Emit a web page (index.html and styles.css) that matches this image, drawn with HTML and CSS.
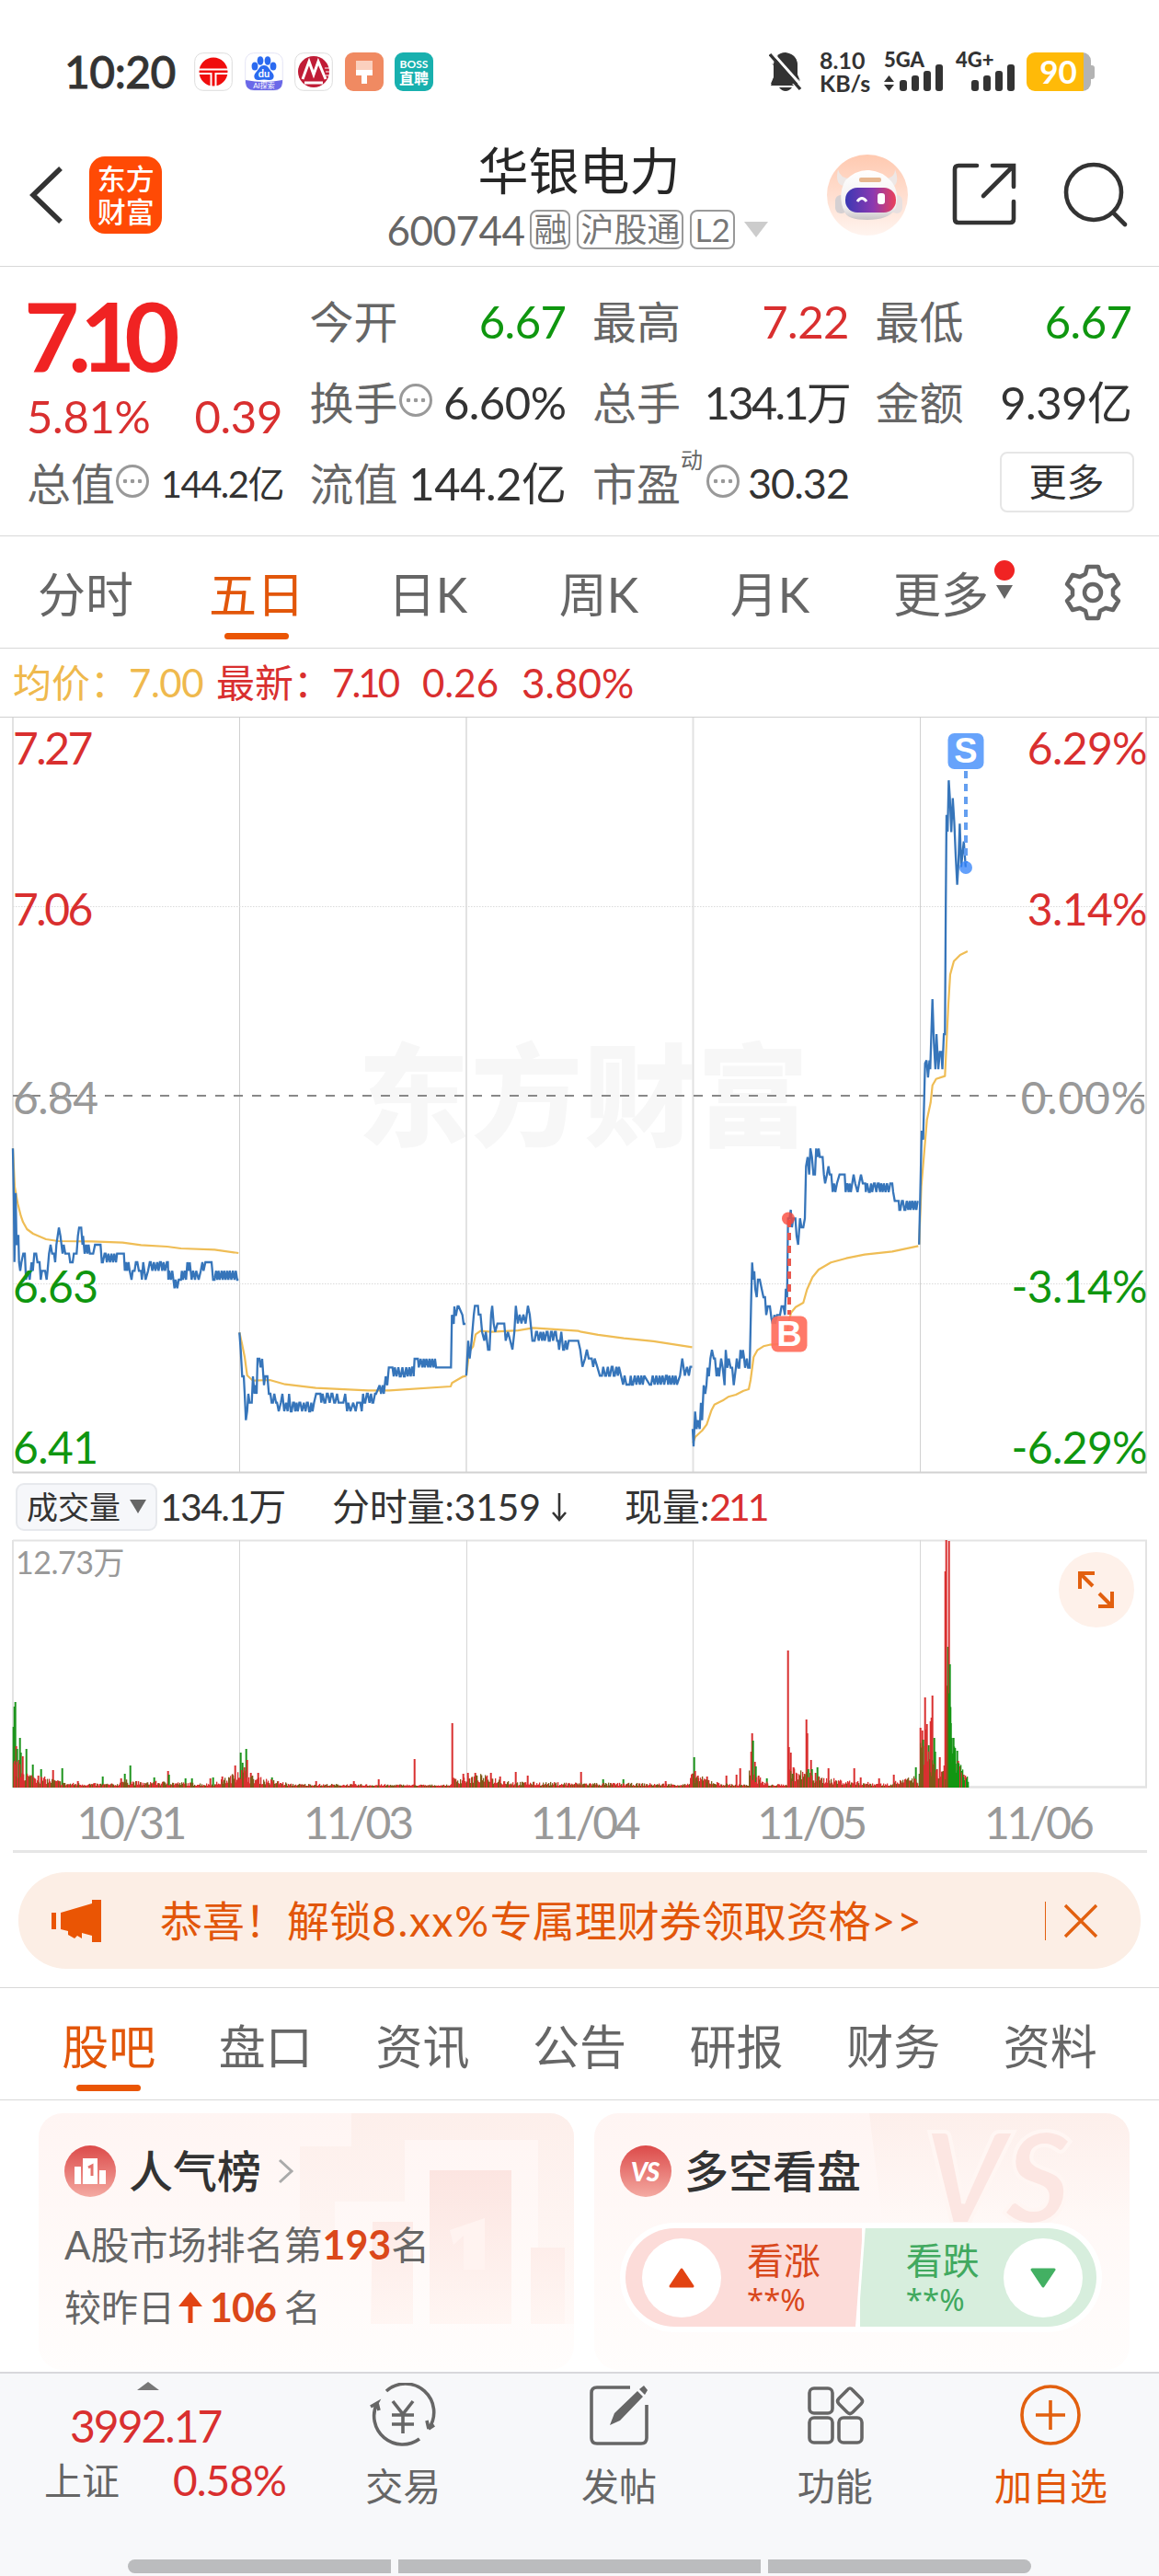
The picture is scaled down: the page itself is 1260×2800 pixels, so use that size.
FILE: index.html
```html
<!DOCTYPE html>
<html lang="zh-CN">
<head>
<meta charset="utf-8">
<title>华银电力 600744</title>
<link rel="stylesheet" href="styles.css">
</head>
<body>
<div class="status">
  <span class="clock">10:20</span>
  <div class="apps">
    <svg viewBox="0 0 42 42"><rect x=".7" y=".7" width="40.6" height="40.6" rx="9" fill="#fff" stroke="#ddd"/><circle cx="21" cy="21" r="15.500" fill="#f00d0d"/><path d="M5 18.500H37M5 23H18.500V37M37 23H23.500V37" stroke="#fff" stroke-width="2" fill="none"/></svg>
    <svg viewBox="0 0 42 42"><rect x=".7" y=".7" width="40.6" height="40.6" rx="9" fill="#fff" stroke="#e4e4f5"/><path d="M1 30Q21 34 41 30V33Q40 41 32 41H10Q2 41 1 33Z" fill="#6a68e8"/><g fill="#2b6af0"><ellipse cx="11" cy="15" rx="3.4" ry="4.5"/><ellipse cx="17" cy="9" rx="3.4" ry="4.8"/><ellipse cx="25" cy="9" rx="3.4" ry="4.8"/><ellipse cx="31" cy="15" rx="3.4" ry="4.5"/><path d="M21 14c5 0 6 5 9 8s2 9-4 8q-5-1-10 0c-6 1-7-5-4-8s4-8 9-8z"/></g><text x="21" y="27" class="t-du">du</text><text x="21" y="39" class="t-ai">AI探索</text></svg>
    <svg viewBox="0 0 42 42"><rect x=".7" y=".7" width="40.6" height="40.6" rx="9" fill="#fff" stroke="#ddd"/><circle cx="21" cy="21" r="17" fill="#c01c36"/><path d="M9 29L16 10L21 24L26 10L34 29M11 33H31" stroke="#fff" stroke-width="3" fill="none"/><path d="M33 17h6M34 21h5M34 25h5" stroke="#fff" stroke-width="1.2"/></svg>
    <svg viewBox="0 0 42 42"><rect width="42" height="42" rx="9" fill="#f08a62"/><path d="M12 9H30V25H24V34H18V25H12Z" fill="#fff"/><path d="M12 9H30V19H12Z" fill="#fbd0be"/></svg>
    <svg viewBox="0 0 42 42"><rect width="42" height="42" rx="9" fill="#18b0ae"/><text x="21" y="17" class="t-boss">BOSS</text><text x="21" y="34" class="t-zhi">直聘</text></svg>
  </div>
  <svg class="bell" viewBox="0 0 36 42"><path d="M7 5Q12 0 18 0Q31 2 31 15V24L34 31L9 3M3 12L27 36H2L5 28V13Z" fill="#333"/><path d="M5 12Q7 2 18 1Q31 2 31 15V26L34 34H2L5 27Z" fill="#333"/><path d="M5 2L37 38" stroke="#fff" stroke-width="3"/><path d="M1 2L34 40" stroke="#333" stroke-width="3.4"/><path d="M11 38H25Q22 42 18 42T11 38Z" fill="#333"/></svg>
  <div class="speed"><span>8.10</span><span>KB/s</span></div>
  <div class="net"><span>5GA</span>
    <svg viewBox="0 0 66 30" width="66" height="30"><path d="M0 20L5.500 13L11 20ZM0 23L5.500 30L11 23Z" fill="#333"/><g fill="#333"><rect x="17" y="18" width="8" height="12" rx="3"/><rect x="30" y="13" width="8" height="17" rx="3"/><rect x="43" y="8" width="8" height="22" rx="3"/><rect x="56" y="1" width="8" height="29" rx="3"/></g></svg></div>
  <div class="net net4"><span>4G+</span>
    <svg viewBox="0 0 66 30" width="66" height="30"><g fill="#333"><rect x="17" y="18" width="8" height="12" rx="3"/><rect x="30" y="13" width="8" height="17" rx="3"/><rect x="43" y="8" width="8" height="22" rx="3"/><rect x="56" y="1" width="8" height="29" rx="3"/></g></svg></div>
  <div class="battery"><span>90</span></div>
</div>

<header class="top">
  <svg class="back" viewBox="0 0 38 66"><path d="M34 4L4 33L34 62" fill="none" stroke="#333" stroke-width="5.500"/></svg>
  <div class="logo"><span>东方</span><span>财富</span></div>
  <div class="title">
    <h1>华银电力</h1>
    <div class="code"><span class="num">600744</span><i>融</i><i>沪股通</i><i>L2</i><b class="caret"></b></div>
  </div>
  <svg class="robot" viewBox="0 0 88 88"><defs><linearGradient id="rb" x2="0" y2="1"><stop stop-color="#ffc9b0"/><stop offset="1" stop-color="#fff4ef"/></linearGradient><linearGradient id="vz"><stop stop-color="#3a38b4"/><stop offset=".55" stop-color="#8c39b0"/><stop offset="1" stop-color="#ea405a"/></linearGradient><linearGradient id="hd" x2="0" y2="1"><stop stop-color="#fff"/><stop offset=".75" stop-color="#f1eeee"/><stop offset="1" stop-color="#c9c4c6"/></linearGradient></defs><circle cx="44" cy="44" r="44" fill="url(#rb)"/><path d="M12 16Q8 34 20 34L26 26Q14 26 12 16ZM74 16Q80 32 70 36L62 26Q74 26 74 16Z" fill="#eee7e5"/><rect x="9" y="44" width="13" height="20" rx="6" fill="#d5d0d2"/><rect x="70" y="44" width="12" height="20" rx="6" fill="#e8e0e0"/><path d="M20 28Q32 16 46 17T70 29Q80 42 74 60Q66 71 44 71T19 62Q11 45 20 28Z" fill="url(#hd)"/><rect x="20" y="36" width="55" height="27" rx="13" fill="url(#vz)"/><rect x="35" y="25" width="24" height="5" rx="2" fill="#e7b78f"/><path d="M33 51Q38 44 43 51" stroke="#fff" stroke-width="3" fill="none"/><rect x="55" y="42" width="8" height="12" rx="3" fill="#fff"/></svg>
  <svg class="share" viewBox="0 0 70 70"><path d="M27 3H7Q3 3 3 7V61Q3 65 7 65H63Q67 65 67 61V42M44 3H67V26M66 4L34 36" fill="none" stroke="#333" stroke-width="4.600" stroke-linecap="round"/></svg>
  <svg class="search" viewBox="0 0 72 72"><circle cx="34" cy="33" r="30" fill="none" stroke="#333" stroke-width="4.600"/><path d="M55 55L68 68" stroke="#333" stroke-width="4.600" stroke-linecap="round"/></svg>
</header>

<section class="quote">
  <div class="last">
    <div class="price">7.10</div>
    <div class="chg"><span>5.81%</span><span>0.39</span></div>
  </div>
  <div class="cell"><label>今开</label><span class="down">6.67</span></div>
  <div class="cell"><label>最高</label><span class="up">7.22</span></div>
  <div class="cell"><label>最低</label><span class="down">6.67</span></div>
  <div class="cell"><label>换手</label><em class="info"></em><span>6.60%</span></div>
  <div class="cell"><label>总手</label><span class="tight">134.1万</span></div>
  <div class="cell"><label>金额</label><span>9.39亿</span></div>
  <div class="cell"><label>总值</label><em class="info"></em><span class="sm">144.2亿</span></div>
  <div class="cell"><label>流值</label><span>144.2亿</span></div>
  <div class="cell"><label>市盈<sup>动</sup></label><em class="info pe"></em><span class="md">30.32</span></div>
  <div class="cell end"><button>更多</button></div>
</section>

<nav class="periods">
  <a>分时</a><a class="on">五日</a><a>日K</a><a>周K</a><a>月K</a><a class="more">更多<i class="dot"></i><i class="tri"></i></a>
  <svg class="gear" viewBox="0 0 62 62"><path d="M25 3H37L39 11L45 14L53 12L59 22L53 28V34L59 40L53 50L45 48L39 51L37 59H25L23 51L17 48L9 50L3 40L9 34V28L3 22L9 12L17 14L23 11Z" fill="none" stroke="#666" stroke-width="4.500" stroke-linejoin="round"/><circle cx="31" cy="31" r="9" fill="none" stroke="#666" stroke-width="4.500"/></svg>
</nav>

<div class="legend"><span class="avg"><u>均价：</u>7.00</span><span class="new"><u>最新：</u>7.10</span><span class="v1">0.26</span><span class="v2">3.80%</span></div>

<svg class="price-chart" viewBox="0 779 1260 823">
  <text x="389" y="1236" class="mark">东方财富</text>
  <g fill="none" stroke="#dadada">
    <path d="M0 779.500H1260M260.500 780V1600M1000.500 780V1600" stroke="#d0d0d0"/>
    <path d="M14 780V1601M507 780V1601M753.500 780V1601M1246 780V1601" stroke="#e2e2e2" stroke-width="2"/>
    <path d="M14 1600.500H1247" stroke="#d2d2d2" stroke-width="2"/>
    <path d="M14 985.500H1247M14 1395.500H1247" stroke-dasharray="1.500 1.500"/>
    <path d="M14 1191H1247" stroke="#888" stroke-width="2" stroke-dasharray="10 10"/>
  </g>
  <g id="avg-line" fill="none" stroke="#efbd55" stroke-width="2.200" stroke-linejoin="round"></g>
  <g id="price-line" fill="none" stroke="#3675ba" stroke-width="2.300" stroke-linejoin="miter" stroke-miterlimit="2"></g>
  <g class="axis">
    <text x="14" y="831" class="up seven">7.27</text><text x="14" y="1006" class="up seven">7.06</text><text x="14" y="1211" class="flat">6.84</text><text x="14" y="1416" class="down">6.63</text><text x="14" y="1591" class="down">6.41</text>
  </g>
  <g class="axis right">
    <text x="1247" y="831" class="up">6.29%</text><text x="1247" y="1006" class="up">3.14%</text><text x="1247" y="1211" class="flat zero">0.00%</text><text x="1247" y="1416" class="down">-3.14%</text><text x="1247" y="1591" class="down">-6.29%</text>
  </g>
  <path d="M1050 838V938" stroke="#649ff0" stroke-width="4" stroke-dasharray="8 6"/><circle cx="1050" cy="943" r="7" fill="#2f80fa" fill-opacity=".75"/>
  <rect x="1030.500" y="797" width="39" height="39" rx="7" fill="#67a3fb"/><text x="1050" y="829" class="trade">S</text>
  <path d="M858 1326V1429" stroke="#e8584e" stroke-width="4" stroke-dasharray="8 6"/><circle cx="857" cy="1324.500" r="7" fill="#fa4a3c" fill-opacity=".8"/>
  <rect x="838.500" y="1430.500" width="39" height="39" rx="7" fill="#ff6e5c" fill-opacity=".92"/><text x="858" y="1463" class="trade">B</text>
</svg>

<div class="vol-head">
  <div class="pick">成交量<i class="tri"></i></div>
  <span class="a">134.1万</span><span class="b">分时量:3159<svg viewBox="0 0 20 34"><path d="M10 2V31M3 23L10 31L17 23" fill="none" stroke="#333" stroke-width="2.600"/></svg></span><span class="c">现量:<span class="up">211</span></span>
</div>
<svg class="vol-chart" viewBox="0 1673 1260 271">
  <path d="M14 1674.500H1247M14 1674V1943M1246 1674V1943" fill="none" stroke="#e3e3e3" stroke-width="2"/>
  <path d="M260.500 1674V1943M507.500 1674V1943M753.500 1674V1943M1000.500 1674V1943" stroke="#d6d6d6"/>
  <path d="M14 1942.500H1247" stroke="#e3e3e3" stroke-width="2.500"/>
  <g id="volume"></g>
  <text x="17" y="1711" class="vmax">12.73万</text>
  <circle cx="1192" cy="1728" r="41" fill="#fef1ea"/>
  <path d="M1188 1724L1174 1710M1174 1727V1710H1190M1195 1732L1209 1746M1209 1730V1746H1194" fill="none" stroke="#e2600f" stroke-width="4"/>
</svg>
<div class="dates"><span>10/31</span><span>11/03</span><span>11/04</span><span>11/05</span><span>11/06</span></div>

<div class="banner">
  <svg class="horn" viewBox="0 0 54 48"><path d="M0 15H5V33H0ZM10 15L44 5V1H54V47H44V40L33 37V43L28 40L25 43L18 39V35L10 33Z" fill="#ea5504"/></svg>
  <span>恭喜！解锁<u>8.xx%</u>专属理财券领取资格<u>&gt;&gt;</u></span>
  <b class="sep"></b>
  <svg class="close" viewBox="0 0 38 38"><path d="M2 2L36 36M36 2L2 36" stroke="#e2600f" stroke-width="3.400"/></svg>
</div>

<nav class="sections"><a class="on">股吧</a><a>盘口</a><a>资讯</a><a>公告</a><a>研报</a><a>财务</a><a>资料</a></nav>

<main class="cards">
  <section class="card">
    <svg class="deco" viewBox="42 2297 582 279"><defs><linearGradient id="f1" x2="0" y2="1"><stop stop-color="#fdefeb"/><stop offset="1" stop-color="#fff9f7"/></linearGradient><linearGradient id="f2" x2="0" y2="1"><stop stop-color="#fce5e1"/><stop offset="1" stop-color="#fff6f3"/></linearGradient></defs><path d="M382 2297H624V2526H585V2326H440V2393H364V2430H326V2333H382Z" fill="url(#f1)"/><path d="M467 2359H556V2526H467ZM405 2415H449V2526H403ZM577 2443H614V2526H577Z" fill="url(#f2)"/><path d="M489 2424L527 2411V2467H504V2430L493 2440Z" fill="#fff3f0"/></svg>
    <div class="head"><svg class="badge" viewBox="0 0 56 56"><defs><linearGradient id="bg" x2="0" y2="1"><stop stop-color="#dc4a49"/><stop offset="1" stop-color="#f4aaa2"/></linearGradient></defs><circle cx="28" cy="28" r="28" fill="url(#bg)"/><path d="M11 23H18V42H11ZM20 14H36V42H20ZM38 27H45V42H38Z" fill="#fff"/><path d="M26 24L30 22V33" fill="none" stroke="#e4716b" stroke-width="3"/></svg><h2>人气榜</h2><svg class="go" viewBox="0 0 18 28"><path d="M2 2L15 14L2 26" fill="none" stroke="#aaa" stroke-width="3"/></svg></div>
    <p class="l1">A股市场排名第<b>193</b>名</p>
    <p class="l2">较昨日<svg viewBox="0 0 26 34"><path d="M13 0L26 16H15.500V34H10.500V16H0Z" fill="#e24312"/></svg><b>106</b>名</p>
  </section>
  <section class="card">
    <svg class="deco" viewBox="646 2297 582 279"><path d="M945 2297H1228V2420H960Z" fill="url(#f1)"/><text x="1004" y="2417" class="ghost">VS</text></svg>
    <div class="head"><svg class="badge" viewBox="0 0 56 56"><circle cx="28" cy="28" r="28" fill="url(#bg)"/><text x="27" y="39" class="vs">VS</text></svg><h2>多空看盘</h2></div>
    <div class="vote">
      <div class="bull"><i><svg viewBox="0 0 28 22"><path d="M14 2L26 20H2Z" fill="#e24312" stroke="#e24312" stroke-width="3" stroke-linejoin="round"/></svg></i><div class="txt"><span>看涨</span><small>**%</small></div></div>
      <div class="bear"><div class="txt"><span>看跌</span><small>**%</small></div><i><svg viewBox="0 0 28 22"><path d="M14 20L26 2H2Z" fill="#43b063" stroke="#43b063" stroke-width="3" stroke-linejoin="round"/></svg></i></div>
    </div>
  </section>
</main>

<footer class="bar">
  <div class="index"><i class="uptri"></i><div class="pts">3992.17</div><div class="row"><span>上证</span><span class="up">0.58%</span></div></div>
  <div class="item"><svg viewBox="0 0 76 70"><g fill="none" stroke="#666" stroke-width="3.600"><path d="M20 9A31 31 0 0 1 66 50L72 46M66 50L64 41M56 61A31 31 0 0 1 10 22L3 26M10 22L12 30"/><path d="M27 20L38 34L49 20M38 34V55M26 35H50M26 45H50"/></g></svg><span>交易</span></div>
  <div class="item"><svg viewBox="0 0 76 70"><path d="M50 5H14Q8 5 8 11V60Q8 66 14 66H62Q68 66 68 60V24" fill="none" stroke="#666" stroke-width="3.600"/><path d="M28 46L33 33L58 9L64 15L39 41ZM60 7L65 3L69 8L66 13Z" fill="#666"/></svg><span>发帖</span></div>
  <div class="item"><svg viewBox="0 0 76 70"><g fill="none" stroke="#666" stroke-width="3.600"><rect x="10" y="6" width="25" height="27" rx="5"/><rect x="10" y="38" width="25" height="27" rx="5"/><rect x="42" y="38" width="25" height="27" rx="5"/><path d="M51 8Q54 4 57 8L66 17Q69 20 66 23L57 32Q54 35 51 32L42 23Q39 20 42 17Z"/></g></svg><span>功能</span></div>
  <div class="item add"><svg viewBox="0 0 76 70"><circle cx="38" cy="35" r="31" fill="none" stroke="#e2600f" stroke-width="3.600"/><path d="M38 19V51M22 35H54" stroke="#e2600f" stroke-width="3.600"/></svg><span>加自选</span></div>
</footer>
<div class="home"><i></i><i class="mid"></i><i></i></div>
<script src="chart.js"></script>
</body>
</html>
```
FILE: styles.css
```css
* { box-sizing: border-box; }
body { margin: 0; width: 1260px; height: 2800px; overflow: hidden; background: #fff; color: #333; font-family: Lato, "Noto Sans CJK SC", sans-serif; font-size: 42px; line-height: 1; white-space: nowrap; }
svg { display: block; flex: none; }
h1, h2, p { margin: 0; font-weight: 400; }
i, em { font-style: normal; }
u { text-decoration: none; }
.up { color: #d92f2f; fill: #d92f2f; }
.down { color: #0f960f; fill: #0f960f; }
.flat { fill: #999; }

.status { display: flex; align-items: center; height: 156px; padding-left: 70px; }
.clock { width: 141px; font-size: 48px; font-weight: 500; -webkit-text-stroke: .8px #333; letter-spacing: -.5px; }
.apps { display: flex; gap: 12.500px; }
.apps svg { width: 42px; height: 42px; }
.t-du { font-size: 11px; font-weight: 700; fill: #fff; text-anchor: middle; }
.t-ai { font-size: 8px; fill: #fff; text-anchor: middle; }
.t-boss { font-size: 12px; font-weight: 700; fill: #fff; text-anchor: middle; }
.t-zhi { font-size: 16px; font-weight: 700; fill: #fff; text-anchor: middle; }
.bell { width: 36px; height: 42px; margin-left: 365px; }
.speed { display: flex; flex-direction: column; justify-content: space-between; width: 70px; height: 48px; margin-left: 19px; font-size: 25px; font-weight: 700; line-height: 23px; }
.net { position: relative; width: 78px; height: 44px; padding-top: 13px; }
.net span { position: absolute; left: 0; top: -2px; font-size: 22px; font-weight: 900; }
.net4 { width: 77px; }
.battery { width: 70px; height: 42px; border-radius: 9px; background: linear-gradient(90deg, #ffba08 62px, #b3b3b3 62px); color: #fff; font-size: 35px; font-weight: 700; text-align: center; line-height: 41px; padding-right: 1px; position: relative; }
.battery::after { content: ""; position: absolute; right: -4px; top: 14px; width: 5px; height: 15px; border-radius: 0 3px 3px 0; background: #b3b3b3; }

.top { display: flex; align-items: center; height: 134px; border-bottom: 1px solid #d8d8d8; padding: 0 33px 22px 32px; }
.back { width: 38px; height: 66px; margin-right: 27px; }
.logo { width: 80px; height: 84px; border-radius: 17px; background: #ff4a05; color: #fff; display: flex; flex-direction: column; align-items: center; justify-content: center; font-size: 31px; font-weight: 500; line-height: 36px; }
.title { display: flex; flex-direction: column; align-items: flex-start; width: 483px; margin-left: 243px; }
h1 { font-size: 55px; line-height: 64px; padding-left: 100px; color: #262626; margin-top: 2px; }
.code { display: flex; align-items: center; height: 46px; margin-top: 10px; color: #666; }
.code .num { font-size: 44px; width: 157px; letter-spacing: -.5px; padding-left: 1px; }
.code i { height: 43px; border: 2px solid #999; border-radius: 8px; font-size: 36px; line-height: 39px; padding: 0 2px; margin-right: 7px; color: #777; }
.code i:nth-of-type(3) { padding: 0 3px; font-size: 35px; margin-right: 10px; }
.caret { border: 13px solid transparent; border-top: 17px solid #ccc; border-bottom: 0; }
.robot { width: 88px; height: 88px; }
.share { width: 70px; height: 70px; margin-left: 48px; }
.search { width: 72px; height: 72px; margin-left: 50px; }

.quote { display: grid; grid-template-columns: repeat(4, 278px); grid-template-rows: 88px 88px 88px; column-gap: 29.500px; padding: 16px 0 12px 29px; height: 293px; border-bottom: 1px solid #d8d8d8; }
.last { grid-row: span 2; }
.price { font-size: 104px; font-weight: 700; color: #f02323; letter-spacing: -12px; line-height: 100px; padding-top: 8px; margin-left: -3px; }
.chg { display: flex; justify-content: space-between; font-size: 49px; color: #d92f2f; margin-top: 14px; letter-spacing: -.3px; }
.cell { display: flex; align-items: center; height: 88px; font-size: 49px; padding-bottom: 1px; }
.cell label { font-size: 48px; color: #666; position: relative; }
.cell > span { margin-left: auto; letter-spacing: -.5px; margin-right: -1px; }
.cell > .tight { letter-spacing: -2.800px; }
.cell > .sm { font-size: 40px; letter-spacing: -1.500px; }
.cell > .md { font-size: 45px; letter-spacing: -1px; }
.cell sup { position: absolute; left: 96px; top: -14px; font-size: 24px; line-height: 24px; }
.info { width: 36px; height: 36px; border: 3px solid #999; border-radius: 50%; background: radial-gradient(circle, #999 2px, transparent 2.600px) center / 8px 30px repeat-x; background-clip: content-box; padding: 0 3px; margin-left: 1px; margin-top: -6px; }
.info.pe { margin-left: 28px; }
.end { justify-content: flex-end; padding-bottom: 5px; }
button { width: 146px; height: 66px; margin-right: -3px; padding: 0; font: 41px/60px Lato, "Noto Sans CJK SC", sans-serif; color: #333; background: #fff; border: 2px solid #e6e6e6; border-radius: 8px; }

.periods { display: flex; height: 122px; border-bottom: 1px solid #d8d8d8; }
.periods a { width: 186px; text-align: center; font-size: 52px; line-height: 126px; color: #666; position: relative; }
.periods .on, .sections .on { color: #e2560a; }
.on::after { content: ""; position: absolute; left: 50%; margin-left: -35px; bottom: 9px; width: 70px; height: 7px; border-radius: 4px; background: #ea5504; }
.tri { border: 9px solid transparent; border-top: 15px solid #666; border-bottom: 0; }
.dot { position: absolute; right: 13px; top: 26px; width: 22px; height: 22px; border-radius: 50%; background: #f02323; }
.more .tri { position: absolute; right: 15px; top: 53px; }
.gear { width: 62px; height: 62px; margin: 30px 0 0 41px; }

.legend { display: flex; align-items: center; height: 74px; padding: 0 0 1px 14px; color: #d92f2f; font-size: 42px; }
.legend u { letter-spacing: 0; font-size: 42px; }
.avg { color: #efb94d; width: 221px; letter-spacing: -.5px; }
.new { width: 224px; letter-spacing: -3px; }
.v1 { width: 108px; }
.v2 { font-size: 44px; }
.price-chart { width: 1260px; height: 823px; }
.axis text { font-size: 48px; letter-spacing: -.6px; }
.axis .seven { letter-spacing: -2.500px; }
.right text { text-anchor: end; }
.axis .zero { letter-spacing: .8px; }
.mark { font-size: 121px; font-weight: 900; fill: #f7f7f7; letter-spacing: 2px; }
.trade { font-size: 38px; font-weight: 700; font-family: "Liberation Sans", sans-serif; fill: #fff; text-anchor: middle; }

.vol-head { display: flex; align-items: center; height: 71px; padding-left: 17px; font-size: 41px; }
.pick { display: flex; align-items: center; justify-content: space-between; width: 154px; height: 52px; padding: 0 10px; font-size: 34px; border: 2px solid #e7e9ed; border-radius: 9px; background: #f6f7fa; }
.a { width: 190px; padding-left: 3px; letter-spacing: -1.700px; }
.b { display: flex; align-items: center; width: 318px; letter-spacing: -.2px; }
.b svg { width: 20px; height: 34px; margin-left: 10px; }
.c .up { letter-spacing: -3px; }
.vol-chart { width: 1260px; height: 271px; }
.vmax { font-size: 34px; fill: #999; letter-spacing: -.5px; }
.dates { display: flex; height: 70px; margin: 0 13px 0 14px; border-bottom: 3px solid #e6e6e6; color: #999; font-size: 48px; line-height: 73px; letter-spacing: -3.300px; text-align: center; }
.dates span { flex: 1; padding-left: 9px; }

.banner { display: flex; align-items: center; height: 105px; margin: 21px 20px 20px; border-radius: 52px; background: #fceee5; color: #e2560a; font-size: 46px; }
.banner u { letter-spacing: 1.700px; }
.horn { width: 54px; height: 48px; margin: 0 64px 0 36px; }
.banner span { width: 962px; }
.sep { width: 1px; height: 42px; background: #e2600f; margin-right: 19px; }
.close { width: 38px; height: 38px; }
.sections { display: flex; height: 123px; border-top: 1px solid #d8d8d8; border-bottom: 1px solid #d8d8d8; padding: 0 33px 0 33px; }
.sections a { flex: 1; text-align: center; font-size: 51px; line-height: 127px; color: #666; position: relative; }

.cards { display: flex; gap: 22px; padding: 14px 0 0 42px; height: 295px; }
.card { position: relative; width: 582px; height: 279px; border-radius: 26px; overflow: hidden; background: linear-gradient(#fff5f3, #fffdfc); padding: 35px 28px; }
.deco { position: absolute; left: 0; top: 0; width: 582px; height: 279px; }
.head { position: relative; display: flex; align-items: center; height: 56px; }
.badge { width: 56px; height: 56px; }
.vs { font-size: 28px; font-weight: 900; font-style: italic; fill: #fff; text-anchor: middle; letter-spacing: -1px; }
.ghost { font-size: 138px; font-weight: 900; font-style: italic; fill: #fce6e2; stroke: #fff6f3; stroke-width: 4; }
h2 { font-size: 48px; font-weight: 500; margin-left: 14px; }
.go { width: 18px; height: 28px; margin-left: 18px; }
p { position: relative; display: flex; align-items: center; color: #666; font-size: 42px; }
p b { color: #db481a; font-size: 43px; }
.l1 { margin-top: 30px; }
.l2 { margin-top: 25px; font-size: 40px; }
.l2 svg { width: 26px; height: 34px; margin: 0 8px 0 4px; }
.l2 b { margin-right: 9px; letter-spacing: -1px; }
.vote { position: relative; display: flex; width: 524px; height: 119px; margin: 28px 0 0; padding: 6px; border-radius: 60px; background: #fff; }
.bull, .bear { display: flex; align-items: center; width: 260px; height: 107px; font-size: 40px; }
.bull { background: #fcdcd9; color: #d9481c; border-radius: 54px 0 0 54px; padding-left: 18px; clip-path: polygon(0 0, 258px 0, 250px 100%, 0 100%); }
.bear { background: #d7eedd; color: #41a95f; border-radius: 0 54px 54px 0; padding-left: 50px; clip-path: polygon(6px 0, 100% 0, 100% 100%, -2px 100%); margin-left: -2px; }
.txt { display: flex; flex-direction: column; width: 82px; line-height: 54px; }
.txt small { font-family: "Noto Sans", sans-serif; font-size: 33px; line-height: 42px; margin-top: -5px; }
.vote i { width: 86px; height: 86px; border-radius: 50%; background: #fff; display: flex; align-items: center; justify-content: center; }
.vote i svg { width: 28px; height: 22px; }
.bull .txt { margin-left: 28px; }
.bear i { margin-left: 24px; }

.bar { display: flex; height: 204px; border-top: 2px solid #d8d8dc; background: #f7f8fa; }
.index { width: 321px; padding: 9px 0 0 48px; font-size: 41px; color: #666; }
.uptri { display: block; width: 0; margin-left: 101px; border: 12px solid transparent; border-bottom: 9px solid #777; border-top: 0; }
.pts { font-size: 48px; color: #d92f2f; margin: 15px 0 0 28px; letter-spacing: -2px; }
.row { display: flex; gap: 58px; margin-top: 13px; align-items: center; height: 44px; }
.row .up { font-size: 46px; letter-spacing: -1px; }
.item { width: 234.700px; display: flex; flex-direction: column; align-items: center; padding-top: 10px; font-size: 41px; color: #666; }
.item svg { width: 76px; height: 70px; margin-bottom: 22px; }
.add { color: #e2560a; }
.home { display: flex; gap: 8px; height: 19px; background: #f7f8fa; padding: 0 139px; }
.home i { width: 286px; height: 15px; background: #bbbcbe; border-radius: 8px 0 0 8px; }
.home .mid { width: 394px; border-radius: 0; }
.home i:last-child { border-radius: 0 8px 8px 0; }
```
FILE: chart.js
```js
// Each run: origin x/y, units per pixel in x/y, then "x,y" vertices.
// "~x1,x2,a,b" oscillates between levels a and b from x1 to x2.
const NS = 'http://www.w3.org/2000/svg';
const A = [0, 1240, 3, 3], B = [0, 770, 2.45, 1.8667], C = [630, 770, 2.489, 1.8667], D = [740, 1200, 3, 3];

let seed = 7;
const rnd = () => (seed = (seed * 16807) % 2147483647) / 2147483647;

function trace(f, src) {
  const out = [];
  const put = (x, y) => out.push((f[0] + x / f[2]).toFixed(1) + ',' + (f[1] + y / f[3]).toFixed(1));
  src.trim().split(/\s+/).forEach(tok => {
    if (tok[0] !== '~') { put(...tok.split(',').map(Number)); return; }
    const [x1, x2, a, b] = tok.slice(1).split(',').map(Number);
    let hi = false;
    for (let x = x1; x < x2; x += (1.2 + rnd() * 0.8) * f[2]) {
      put(x, hi ? a : b);
      if (rnd() < 0.3) { x += 1.1 * f[2]; put(x, hi ? a : b); }
      hi = !hi;
    }
  });
  return out.join(' ');
}
function draw(id, runs) {
  const p = document.createElementNS(NS, 'polyline');
  p.setAttribute('points', runs.map(r => trace(r[0], r[1])).join(' '));
  document.getElementById(id).appendChild(p);
}

draw('avg-line', [[A, '42,25 48,150 58,205 68,245 75,265 88,288 108,303 150,321 190,327 300,328 400,332 460,340 545,345 590,351 700,355 778,366']]);
draw('avg-line', [[A, '781,625 790,665 798,705 806,765 825,782 880,780 930,794 1030,806 1200,814 1270,814 1470,801 1474,790 1510,769 1520,767']]);
draw('avg-line', [[B, '1242,1354 1250,1305 1260,1295 1267,1270 1280,1263 1310,1265 1380,1262 1420,1257 1540,1263'], [C, '5,1265 50,1271 120,1278 200,1284 305,1296']]);
draw('avg-line', [[D, '40,1105 48,1085 70,1065 85,1045 100,1000 110,980 140,965 155,955 180,948 205,935 222,930 228,900 238,825 250,803 270,790 290,785 345,782 350,720 360,680 375,662 400,648 412,605 430,565 450,540 490,517 540,503 600,491 690,481 775,463']]);
draw('avg-line', [[C, '919,1088 925,970 933,900 940,835 950,800 955,765 965,752 989,746 993,680 998,600 1003,540 1013,513 1030,500 1050,493']]);

draw('price-line', [[A, '42,25 45,195 47,395 51,170 54,340 57,310 60,310 62,396 66,424 70,396 76,368 81,368 85,453 92,424 97,453 103,396 107,424 112,368 118,368 122,396 129,396 133,453 137,424 147,424 152,453 155,424 160,368 165,339 170,368 176,368 180,396 184,339 188,310 192,283 197,310 204,368 208,339 213,368 225,368 229,396 237,396 241,368 250,368 254,310 258,283 265,283 269,339 271,310 276,368 281,339 285,368 289,339 293,368 304,368 310,339 328,339 ~332,385,368,396 386,368 404,368 407,424 411,396 415,424 419,396 423,424 429,453 433,424 439,424 443,396 448,396 453,424 460,424 463,453 467,396 475,453 ~483,545,396,424 549,453 552,424 557,453 562,424 569,481 573,453 578,481 583,453 590,453 593,424 597,453 602,424 607,453 611,396 616,424 619,396 625,453 630,424 636,453 640,424 648,453 655,424 660,396 664,424 670,396 690,396 695,453 ~700,776,424,453 778,453']]);
draw('price-line', [[A, '781,625 785,682 790,768 795,768 798,825 802,911 806,882 810,825 814,854 821,854 825,768 830,825 833,797 837,825 840,711 846,711 850,739 855,711 861,797 865,768 872,768 877,825 882,825 886,854 ~890,905,825,854 909,882 916,854 921,825 927,882 933,854 938,882 943,825 ~948,1028,854,882 1031,825 1045,825 ~1048,1108,825,854 1120,854 1126,825 1132,882 1136,854 1143,882 1152,854 1160,882 1165,854 1175,854 1180,882 1184,825 ~1188,1230,825,854 1238,797 1243,825 1248,797 1252,825 1258,768 1263,797 1268,739 1280,739 ~1284,1345,739,768 1349,768 1352,711 1363,711 ~1366,1426,711,739 1430,739 1471,739 1474,568 1480,597 1482,540 ~1484,1500,540,568 1508,568 1512,597 1518,597']]);
draw('price-line', [[B, '1242,1354 1247,1283 1251,1319 1256,1283 1262,1230 1265,1212 1273,1212 1275,1230 1280,1230 1284,1265 1290,1283 1294,1265 1300,1301 1304,1301 1308,1230 1311,1212 1315,1248 1319,1265 1325,1248 1343,1248 1347,1283 1353,1265 1359,1283 1365,1301 1370,1265 1374,1212 1379,1248 1384,1230 1389,1248 1394,1230 1400,1248 1406,1212 1411,1230 1418,1283 ~1424,1485,1265,1283 1489,1301 1495,1265 ~1500,1518,1283,1301 1520,1283 1540,1283'], [C, '2,1301 8,1336 15,1319 20,1301 25,1319 33,1319 37,1336 41,1319 48,1336 55,1354 ~58,110,1336,1354 118,1372 122,1354 127,1372 ~133,178,1354,1372 190,1372 ~194,266,1354,1372 272,1354 278,1319 285,1354 291,1336 296,1354 300,1336 305,1336']]);
draw('price-line', [[D, '39,1060 42,1117 47,1003 52,1060 56,1031 62,1060 66,974 70,1031 75,917 80,945 84,917 88,860 92,888 97,830 102,802 108,830 112,830 117,888 121,860 125,888 132,830 137,860 143,917 147,802 152,860 157,830 163,860 168,860 173,917 180,860 183,830 188,860 191,860 195,802 199,830 203,802 207,830 210,860 216,830 220,860 225,860 230,630 233,517 237,573 240,545 243,602 248,630 252,573 258,573 264,602 270,630 275,630 279,688 284,660 291,660 296,700 300,717 306,688 308,717 314,688 324,688 329,660 335,660 340,688 343,602 347,630 350,373 355,373 359,345 363,402 367,373 374,373 378,430 383,459 389,373 394,402 400,402 405,373 409,203 414,173 419,230 423,145 428,173 433,230 438,230 442,145 446,173 450,145 454,173 463,173 467,230 471,259 477,230 482,203 486,230 491,230 ~496,512,259,287 518,230 535,230 538,287 543,259 548,287 551,259 555,287 564,230 569,259 577,287 582,259 588,230 594,259 602,259 ~604,685,259,287 690,259 693,287 698,316 711,316 ~713,777,316,345']]);
draw('price-line', [[C, '919,1088 926,857 930,875 935,720 939,714 943,749 947,714 949,732 955,590 959,679 963,732 966,661 971,732 975,697 979,697 982,732 986,661 989,661 991,400 993,216 996,250 999,146 1002,180 1006,251 1010,182 1014,230 1018,300 1022,358 1025,320 1029,234 1033,322 1037,290 1040,270 1045,322']]);

// Background turnover: [from, to, start height, end height]
const base = [[14, 30, 30, 16], [30, 70, 15, 6], [70, 130, 5, 4], [130, 160, 9, 5], [160, 235, 7, 4], [235, 257, 6, 16], [257, 270, 24, 15], [270, 312, 13, 5], [312, 490, 4, 3], [490, 520, 10, 13], [520, 560, 14, 6], [560, 750, 6, 4], [750, 780, 15, 6], [780, 812, 5, 3], [814, 835, 17, 5], [835, 855, 3, 4], [856, 885, 20, 16], [885, 925, 12, 7], [925, 965, 7, 4], [965, 998, 5, 13], [1000, 1018, 47, 26], [1018, 1028, 14, 20], [1029, 1040, 120, 26], [1040, 1053, 28, 10]];
const peaks = 'g14:66 g15:88 g16:93 r17:45 g18:42 r20:30 g21:54 g22:38 r24:34 g28:42 g35:25 r41:13 g44:20 r57:19 g67:21 r84:7 g111:12 r131:10 g135:15 g141:24 g167:11 r182:18 g183:14 g201:10 g208:10 r228:10 g231:11 r241:12 r252:14 r255:24 g261:38 g263:27 r265:22 g267:42 r268:30 r272:16 r280:16 g295:11 r343:7 r384:7 r411:9 r450:31 r491:70 r503:15 r508:16 r516:16 r533:16 r543:12 r560:17 r573:13 r631:17 g655:9 g677:9 r723:7 g754:33 r755:18 r758:13 r768:12 r789:13 r800:14 r804:21 r816:39 r817:59 g818:51 r820:28 g821:23 r824:13 g833:10 r856:149 r857:44 r859:38 g861:15 r862:22 r874:15 r876:74 r877:59 g878:20 r881:30 g882:20 r886:16 g888:22 r900:21 r928:21 r935:11 r955:10 r971:14 g995:22 g999:15 r1000:65 r1002:62 g1003:52 r1005:98 r1006:63 r1007:69 g1009:46 r1011:72 r1012:76 r1013:100 g1015:54 g1016:39 r1018:20 r1021:33 r1026:24 r1027:235 r1028:269 g1030:153 r1031:268 g1032:134 g1033:70 g1034:54 g1036:54 g1038:26 g1040:40 r1041:29 r1043:20 g1045:18 r1047:14 r1050:11';
const vol = document.getElementById('volume');
function bar(x, h, c, w) {
  const r = document.createElementNS(NS, 'rect');
  r.setAttribute('x', x); r.setAttribute('y', 1943 - h);
  r.setAttribute('width', w); r.setAttribute('height', h);
  r.setAttribute('fill', c);
  vol.appendChild(r);
}
bar(14, 2, '#a0401c', 1039);
peaks.split(' ').forEach(p => {
  const [x, h] = p.slice(1).split(':').map(Number);
  bar(x - 0.3, h, p[0] === 'r' ? '#d93030' : '#1d941d', 2);
});
base.forEach(([a, b, s, e]) => {
  for (let x = a; x < b; x++) {
    const h = (s + (e - s) * (x - a) / (b - a)) * (0.35 + rnd() * 0.75);
    const late = x > 1030;
    bar(x, h, rnd() < (late ? 0.25 : 0.6) ? '#d93030' : late ? '#129612' : '#7c5a18', 1.3);
  }
});
```
